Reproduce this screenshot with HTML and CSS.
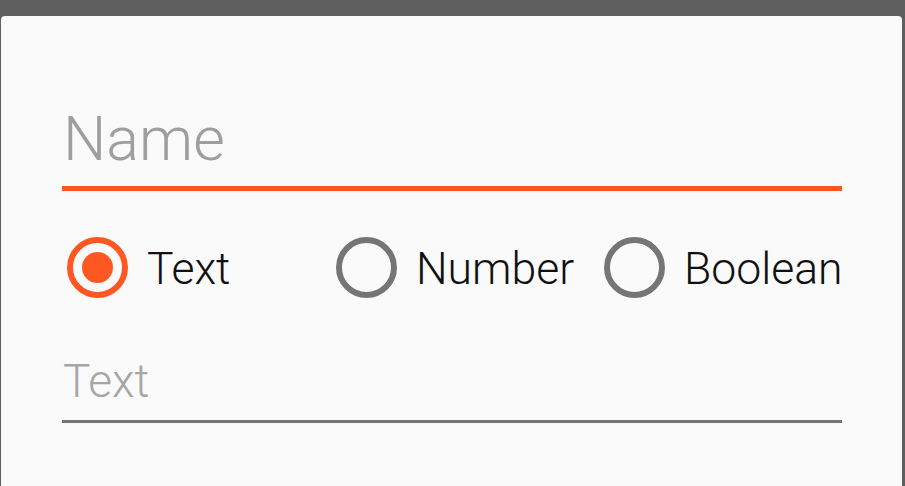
FILE: index.html
```html
<!DOCTYPE html>
<html>
<head>
<meta charset="utf-8">
<link rel="stylesheet" href="styles.css">
</head>
<body>
<div class="dialog">
  <div class="field field-name">
    <div class="hint hint-name">Name</div>
    <div class="underline underline-focused"></div>
  </div>
  <div class="radio-group">
    <div class="option">
      <span class="radio radio-checked"><span class="dot"></span></span>
      <span class="label">Text</span>
    </div>
    <div class="option">
      <span class="radio"></span>
      <span class="label">Number</span>
    </div>
    <div class="option">
      <span class="radio"></span>
      <span class="label">Boolean</span>
    </div>
  </div>
  <div class="field field-value">
    <div class="hint hint-value">Text</div>
    <div class="underline underline-normal"></div>
  </div>
</div>
</body>
</html>
```

FILE: styles.css
```css
html, body {
  margin: 0;
  padding: 0;
}
body {
  background: #5f5f5f;
  height: 486px;
  overflow: hidden;
  font-family: Roboto, "Noto Sans", sans-serif;
  font-weight: 300;
}
.dialog {
  margin: 16px 0 0 1px;
  width: 901px;
  height: 470px;
  box-sizing: border-box;
  background: #fafafa;
  border-radius: 4px 4px 0 0;
  padding: 93px 60px 0 61px;
}
.hint {
  color: #9e9e9e;
  white-space: nowrap;
}
.hint-name {
  font-size: 61px;
  line-height: 61px;
  padding-left: 1px;
}
.underline {
  width: 100%;
}
.underline-focused {
  margin-top: 16px;
  height: 5px;
  background: #ff5722;
}
.radio-group {
  margin-top: 46px;
  display: grid;
  grid-template-columns: 269px 268px 1fr;
}
.option {
  display: flex;
  align-items: flex-start;
  padding-left: 5px;
}
.radio {
  width: 61px;
  height: 61px;
  box-sizing: border-box;
  border: 6px solid #757575;
  border-radius: 50%;
  display: flex;
  align-items: center;
  justify-content: center;
  flex: none;
}
.radio-checked {
  border-color: #ff5722;
}
.dot {
  width: 31px;
  height: 31px;
  border-radius: 50%;
  background: #ff5722;
}
.label {
  margin-left: 19px;
  font-size: 44.5px;
  line-height: 60px;
  padding-top: 2px;
  color: #111111;
  white-space: nowrap;
}
.field-value {
  margin-top: 59px;
}
.hint-value {
  font-size: 46px;
  line-height: 46px;
  color: #a6a6a6;
  padding-left: 1px;
}
.underline-normal {
  margin-top: 16px;
  height: 3px;
  background: #757575;
}
```
